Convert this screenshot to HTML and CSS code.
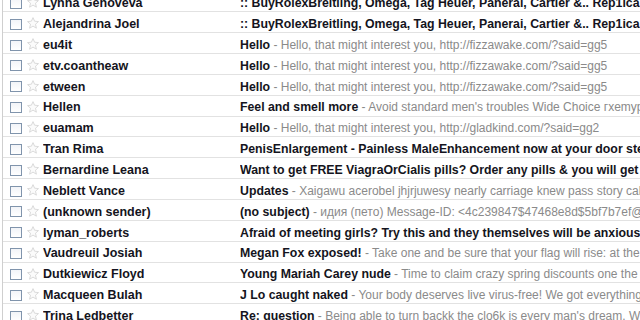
FILE: index.html
```html
<!DOCTYPE html>
<html>
<head>
<meta charset="utf-8">
<link rel="stylesheet" href="styles.css">
</head>
<body>
<svg width="0" height="0" class="defs">
  <defs>
    <symbol id="star" viewBox="0 0 12 12">
      <path d="M6 0.6 L7.6 4.2 L11.5 4.6 L8.5 7.2 L9.4 11.2 L6 9.1 L2.6 11.2 L3.5 7.2 L0.5 4.6 L4.4 4.2 Z" fill="#fbfbfb" stroke="#d6d6d6" stroke-width="0.9" stroke-linejoin="round"/>
    </symbol>
  </defs>
</svg>
<div class="list">
  <div class="row"><span class="cb"></span><svg class="star"><use href="#star"/></svg><span class="from">Lynna Genoveva</span><span class="subj"><b>:: BuyRolexBreitling, Omega, Tag Heuer, Panerai, Cartier &amp;.. Rep1ica Watches</b></span></div>
  <div class="row"><span class="cb"></span><svg class="star"><use href="#star"/></svg><span class="from">Alejandrina Joel</span><span class="subj"><b>:: BuyRolexBreitling, Omega, Tag Heuer, Panerai, Cartier &amp;.. Rep1ica Watches</b></span></div>
  <div class="row"><span class="cb"></span><svg class="star"><use href="#star"/></svg><span class="from">eu4it</span><span class="subj"><b>Hello</b><span class="snip"> - Hello, that might interest you, http://fizzawake.com/?said=gg5</span></span></div>
  <div class="row"><span class="cb"></span><svg class="star"><use href="#star"/></svg><span class="from">etv.coantheaw</span><span class="subj"><b>Hello</b><span class="snip"> - Hello, that might interest you, http://fizzawake.com/?said=gg5</span></span></div>
  <div class="row"><span class="cb"></span><svg class="star"><use href="#star"/></svg><span class="from">etween</span><span class="subj"><b>Hello</b><span class="snip"> - Hello, that might interest you, http://fizzawake.com/?said=gg5</span></span></div>
  <div class="row"><span class="cb"></span><svg class="star"><use href="#star"/></svg><span class="from">Hellen</span><span class="subj"><b>Feel and smell more</b><span class="snip"> - Avoid standard men's troubles Wide Choice гхemypo</span></span></div>
  <div class="row"><span class="cb"></span><svg class="star"><use href="#star"/></svg><span class="from">euamam</span><span class="subj"><b>Hello</b><span class="snip"> - Hello, that might interest you, http://gladkind.com/?said=gg2</span></span></div>
  <div class="row"><span class="cb"></span><svg class="star"><use href="#star"/></svg><span class="from">Tran Rima</span><span class="subj"><b>PenisEnlargement - Painless MaleEnhancement now at your door step</b></span></div>
  <div class="row"><span class="cb"></span><svg class="star"><use href="#star"/></svg><span class="from">Bernardine Leana</span><span class="subj"><b>Want to get FREE ViagraOrCialis pills? Order any pills &amp; you will get 2</b></span></div>
  <div class="row"><span class="cb"></span><svg class="star"><use href="#star"/></svg><span class="from">Neblett Vance</span><span class="subj"><b>Updates</b><span class="snip"> - Xaigawu acerobel jhjrjuwesy nearly carriage knew pass story call him</span></span></div>
  <div class="row"><span class="cb"></span><svg class="star"><use href="#star"/></svg><span class="from">(unknown sender)</span><span class="subj"><b>(no subject)</b><span class="snip"> - идия (пето) Message-ID: &lt;4c239847$47468e8d$5bf7b7ef@ee</span></span></div>
  <div class="row"><span class="cb"></span><svg class="star"><use href="#star"/></svg><span class="from">lyman_roberts</span><span class="subj"><b>Afraid of meeting girls? Try this and they themselves will be anxious</b></span></div>
  <div class="row"><span class="cb"></span><svg class="star"><use href="#star"/></svg><span class="from">Vaudreuil Josiah</span><span class="subj"><b>Megan Fox exposed!</b><span class="snip"> - Take one and be sure that your flag will rise: at the</span></span></div>
  <div class="row"><span class="cb"></span><svg class="star"><use href="#star"/></svg><span class="from">Dutkiewicz Floyd</span><span class="subj"><b>Young Mariah Carey nude</b><span class="snip"> - Time to claim crazy spring discounts one the</span></span></div>
  <div class="row"><span class="cb"></span><svg class="star"><use href="#star"/></svg><span class="from">Macqueen Bulah</span><span class="subj"><b>J Lo caught naked</b><span class="snip"> - Your body deserves live virus-free! We got everything you</span></span></div>
  <div class="row"><span class="cb"></span><svg class="star"><use href="#star"/></svg><span class="from">Trina Ledbetter</span><span class="subj"><b>Re: question</b><span class="snip"> - Being able to turn backk the clo6k is every man's dream. We</span></span></div>
</div>
</body>
</html>
```
FILE: styles.css
```css
html, body {
  margin: 0;
  padding: 0;
  background: #fff;
  overflow: hidden;
  width: 640px;
  height: 320px;
}
.defs {
  position: absolute;
  width: 0;
  height: 0;
}
.list {
  margin-top: -8.6px;
  margin-left: 2px;
  border-left: 1px solid #cfcfcf;
  font-family: "Liberation Sans", Arial, sans-serif;
  font-size: 12.5px;
}
.row {
  box-sizing: border-box;
  height: 20.87px;
  border-bottom: 1px solid #e2e2e2;
  display: grid;
  grid-template-columns: 12px 17px 201px 1fr;
  column-gap: 0;
  align-items: center;
  padding-left: 7px;
  white-space: nowrap;
  overflow: hidden;
}
.cb {
  box-sizing: border-box;
  width: 12px;
  height: 11px;
  border: 1px solid #8094ac;
  background: linear-gradient(#f2f4f8, #ffffff);
  margin-top: 4px;
}
.star {
  width: 12px;
  height: 12px;
  margin-left: 5px;
  margin-top: 2px;
}
.from {
  font-weight: bold;
  color: #141420;
  line-height: 18px;
  padding-top: 3.5px;
  margin-left: 4px;
  overflow: hidden;
}
.subj {
  color: #141420;
  line-height: 18px;
  padding-top: 3.5px;
  overflow: hidden;
}
.subj b {
  font-weight: bold;
  font-size: 12.3px;
}
.snip {
  color: #8a8a8a;
  font-size: 12px;
}
```
